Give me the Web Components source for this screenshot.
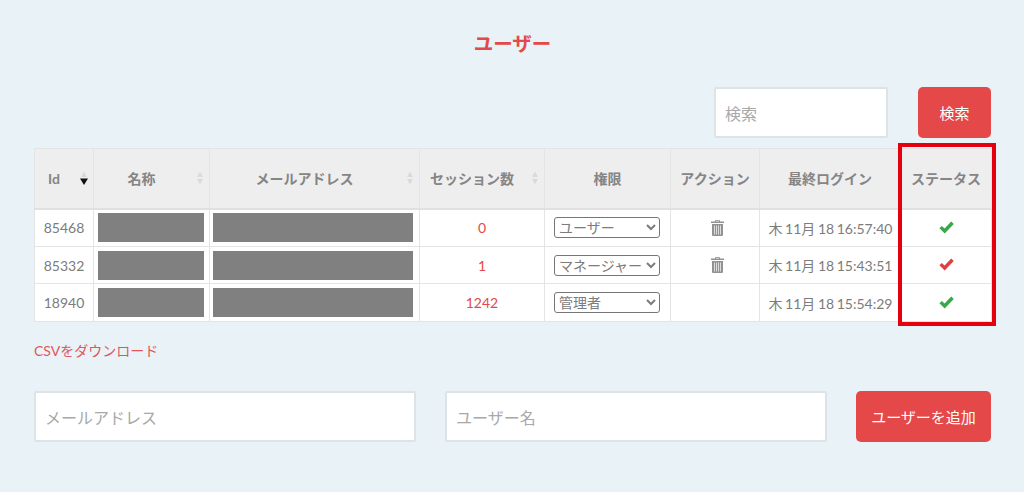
<!DOCTYPE html>
<html lang="ja"><head><meta charset="utf-8"><title>ユーザー</title>
<style>
html,body{margin:0;padding:0;background:#e9f2f6}
body{font-family:Lato,"Noto Sans CJK JP",sans-serif;font-size:14px;color:#777}
</style></head><body>
<x-app>
  <x-title>ユーザー</x-title>
  <x-toolbar>
    <x-field style="--w:174px">検索</x-field>
    <x-btn style="--w:73px">検索</x-btn>
  </x-toolbar>
  <x-users></x-users>
  <x-csv>CSVをダウンロード</x-csv>
  <x-form>
    <x-field style="--w:382px">メールアドレス</x-field>
    <x-field style="--w:382px">ユーザー名</x-field>
    <x-btn style="--w:135px">ユーザーを追加</x-btn>
  </x-form>
</x-app>
<script>
function def(name, css, html, init){
  customElements.define(name, class extends HTMLElement{
    constructor(){super();this.attachShadow({mode:'open'}).innerHTML='<style>'+css+'</style>'+html;}
    connectedCallback(){init&&init(this);}
  });
}
def('x-app',':host{display:flex;flex-direction:column;width:991px;height:492px;box-sizing:border-box;padding:32px 0 0 34px}','<slot></slot>');
def('x-title',':host{display:block;text-align:center;font-size:19.5px;font-weight:700;line-height:24px;color:#e54848}','<slot></slot>');
def('x-toolbar',':host{display:flex;justify-content:flex-end;gap:30px;margin-top:31px}','<slot></slot>');
def('x-form',':host{display:flex;gap:29px;margin-top:30px}','<slot></slot>');
def('x-field',':host{display:flex;align-items:center;box-sizing:border-box;width:var(--w);height:51px;padding:0 9px;background:#fff;border:2px solid #dde3e6;border-radius:2px;font-size:16px;color:#a8a8a8}','<slot></slot>');
def('x-btn',':host{display:flex;align-items:center;justify-content:center;box-sizing:border-box;width:var(--w);height:51px;background:#e54848;border-radius:5px;color:#fff;font-size:15px}','<slot></slot>');
def('x-csv',':host{display:block;margin-top:19px;line-height:20px;font-size:14px;color:#e2555b}','<slot></slot>');
def('x-check',':host{display:inline-block;width:15px;height:13px;color:var(--c,#38a84a);vertical-align:middle;position:relative;top:-2px}svg{display:block}',
  '<svg width="15" height="13" viewBox="0 0 15 13"><path fill="currentColor" d="M0.4 7.2 2.8 4.9 5.6 7.500 12.200 0.600 14.800 3 5.700 12.600Z"/></svg>');
def('x-trash',':host{display:inline-block;width:13px;height:16px;color:#929292;vertical-align:middle}svg{display:block}',
  '<svg width="13" height="16" viewBox="0 0 13 16"><path fill="currentColor" d="M4.500 0h4l.7 1.500H13V3H0V1.500H3.800ZM5.200.8 5 1.500H8L7.800.8ZM1 4h11v11a1 1 0 0 1-1 1H2a1 1 0 0 1-1-1Z"/><path stroke="#dcdcdc" stroke-width="1" d="M3.500 5.500v9M5.500 5.500v9M7.500 5.500v9M9.500 5.500v9"/></svg>');
def('x-sort',':host{position:absolute;right:5px;top:50%;margin-top:-7px;width:8px;height:14px}svg{display:block}',
  '<svg width="8" height="14" viewBox="0 0 8 14"><path fill="#d8dbdd" d="M4 .5 7 6H1Z"/><path id="d" fill="#d8dbdd" d="M1 8H7L4 13.500Z"/></svg>',
  el=>{ if(el.hasAttribute('active')){const d=el.shadowRoot.getElementById('d');d.setAttribute('fill','#111');d.setAttribute('d','M0 7.500H8L4 14Z');} });
def('x-highlight',':host{position:absolute;left:864px;top:-5px;width:98px;height:183px;box-sizing:border-box;border:4px solid #e5000f;pointer-events:none}','');
def('x-users',`
:host{display:block;position:relative;width:957px;margin-top:10px}
table{border-collapse:collapse;table-layout:fixed;width:957px;font-size:14px;color:#7c7c7c}
th,td{border:1px solid #e2e4e5;padding:0;text-align:center}
th{height:60px;background:#eee;font-weight:700;color:#858585;position:relative;border-bottom:2px solid #e0e0e0;box-sizing:border-box}
th.s{padding-right:20px}
th.p,td.p{padding-left:2px}
td.t{padding-left:5px}
td{background:#fff;height:37px;box-sizing:border-box}
tr.o td{height:38px}
td.n{color:#e54848}
td.a{padding:0 5px 0 4px}
td.b{padding:0 6px 0 3px}
td.d{word-spacing:-1px;padding-left:3px}
.g{height:29px;background:#808080}
select{box-sizing:border-box;width:106px;height:21px;font:14px Lato,"Noto Sans CJK JP",sans-serif;color:#7c7c7c;background:#fff;border:1px solid #767676;border-radius:3px;padding:0;display:block;margin:0 0 0 9px}
x-check.bad{--c:#e04045}
x-trash{position:relative;top:-1px}
`,'<table><colgroup><col style="width:59px"><col style="width:116px"><col style="width:210px"><col style="width:125px"><col style="width:126px"><col style="width:89px"><col style="width:139px"><col style="width:93px"></colgroup><thead><tr>'+
'<th class="s">Id<x-sort active></x-sort></th><th class="s">名称<x-sort></x-sort></th><th class="s">メールアドレス<x-sort></x-sort></th><th class="s">セッション数<x-sort></x-sort></th><th>権限</th><th>アクション</th><th class="p">最終ログイン</th><th class="p">ステータス</th></tr></thead><tbody id="b"></tbody></table><x-highlight></x-highlight>',
el=>{
  const roles=['ユーザー','マネージャー','管理者'];
  const rows=[['85468','0',0,1,'木 11月 18 16:57:40',0],['85332','1',1,1,'木 11月 18 15:43:51',1],['18940','1242',2,0,'木 11月 18 15:54:29',0]];
  el.shadowRoot.getElementById('b').innerHTML=rows.map((r,k)=>'<tr'+(k!=1?' class="o"':'')+'><td>'+r[0]+'</td><td class="a"><div class="g"></div></td><td class="b"><div class="g"></div></td><td class="n">'+r[1]+'</td><td><select>'+roles.map((o,i)=>'<option'+(i==r[2]?' selected':'')+'>'+o+'</option>').join('')+'</select></td><td class="t">'+(r[3]?'<x-trash></x-trash>':'')+'</td><td class="d">'+r[4]+'</td><td class="p"><x-check'+(r[5]?' class="bad"':'')+'></x-check></td></tr>').join('');
});
</script>
</body></html>
